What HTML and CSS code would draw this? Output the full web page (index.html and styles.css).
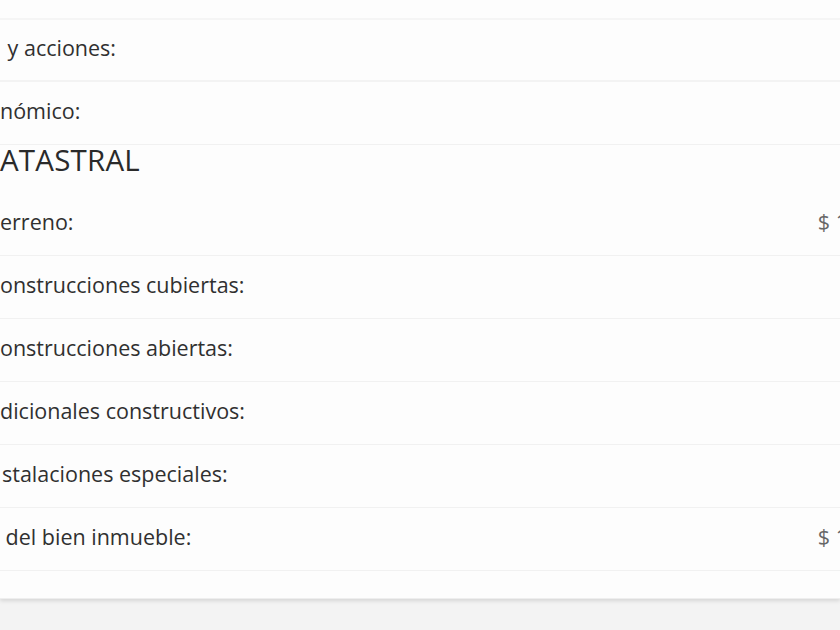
FILE: index.html
```html
<!DOCTYPE html>
<html lang="es">
<head>
<meta charset="utf-8">
<link rel="stylesheet" href="styles.css">
</head>
<body>
<div class="card">
  <div class="row row-partial"></div>
  <div class="row row-first"><span class="label label-in">&nbsp;y acciones:</span></div>
  <div class="row"><span class="label">nómico:</span></div>
  <div class="heading">ATASTRAL</div>
  <div class="row row-top"><span class="label">erreno:</span><span class="value">$ 1</span></div>
  <div class="row"><span class="label">onstrucciones cubiertas:</span></div>
  <div class="row"><span class="label">onstrucciones abiertas:</span></div>
  <div class="row"><span class="label">dicionales constructivos:</span></div>
  <div class="row"><span class="label label-in">stalaciones especiales:</span></div>
  <div class="row"><span class="label">&nbsp;del bien inmueble:</span><span class="value">$ 1</span></div>
  <div class="row row-end"></div>
</div>
</body>
</html>
```

FILE: styles.css
```css
html, body {
  margin: 0;
  padding: 0;
  background: #f3f3f3;
  overflow: hidden;
  width: 840px;
  height: 630px;
}
.card {
  background: #fdfdfd;
  box-shadow: 0 2px 4px rgba(0,0,0,0.12);
  font-family: "Open Sans", "Noto Sans", sans-serif;
  color: #303030;
}
.row {
  display: flex;
  align-items: center;
  justify-content: space-between;
  height: 62px;
  border-bottom: 1px solid #f1f1f1;
  font-size: 21.5px;
  white-space: nowrap;
  overflow: hidden;
}
.row-partial { height: 18px; border-bottom: 2px solid #f5f5f5; }
.row-first { height: 60px; border-bottom: 2px solid #f3f3f3; }
.row-top { height: 62px; }
.row-end { height: 27px; border-bottom: 1px solid #eeeeee; }
.label { padding-bottom: 5px; }
.label-in { padding-left: 2px; }
.value {
  color: #666;
  margin-right: -8px;
  padding-bottom: 5px;
}
.heading {
  height: 48px;
  font-size: 29.5px;
  line-height: 30px;
  color: #2a2a2a;
  letter-spacing: 0.2px;
}
```
